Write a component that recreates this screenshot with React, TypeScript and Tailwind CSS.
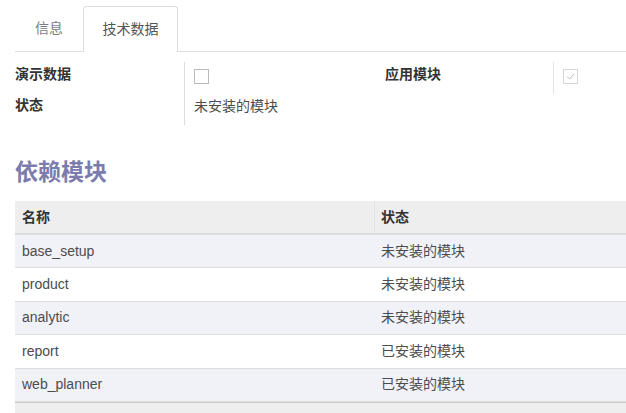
import React from 'react';

const rows = [
  { name: 'base_setup', state: '未安装的模块' },
  { name: 'product', state: '未安装的模块' },
  { name: 'analytic', state: '未安装的模块' },
  { name: 'report', state: '已安装的模块' },
  { name: 'web_planner', state: '已安装的模块' },
];

const font = { fontFamily: '"Liberation Sans", "Noto Sans CJK SC", sans-serif' };

export default function App() {
  return (
    <div className="w-[626px] h-[413px] overflow-hidden bg-white text-[14px] text-[#4c4c4c]" style={font}>
      {/* Tabs */}
      <div className="ml-[15px] mt-[6px] flex h-[46px] border-b border-[#dddddd]">
        <div className="flex w-[68px] items-center justify-center text-[#7a7a8a]">信息</div>
        <div className="-mb-px flex w-[95px] items-center justify-center rounded-t-[4px] border border-b-0 border-[#dddddd] bg-white text-[#555555]">
          技术数据
        </div>
      </div>

      {/* Form */}
      <div className="ml-[15px] mt-[10px] flex">
        <div className="w-[169px] pt-[2px] font-bold text-[#333333]">
          <div className="h-[31px]">演示数据</div>
          <div>状态</div>
        </div>
        <div className="h-[63px] w-[201px] border-l border-[#dddddd] pl-[9px]">
          <div className="mt-[7px] h-[15px] w-[15px] border border-[#bbbbbb]" />
          <div className="mt-[12px]">未安装的模块</div>
        </div>
        <div className="w-[168px] pt-[2px] font-bold text-[#333333]">应用模块</div>
        <div className="h-[32px] border-l border-[#e3e3e3] pl-[9px]">
          <div className="mt-[7px] flex h-[15px] w-[15px] items-center justify-center border border-[#d6d6d6]">
            <svg width="11" height="11" viewBox="0 0 11 11">
              <path d="M2 5.5 L4.5 8 L9 3" fill="none" stroke="#bbbbbb" strokeWidth="1" />
            </svg>
          </div>
        </div>
      </div>

      {/* Heading */}
      <div className="ml-[15px] mt-[31px] text-[23px] font-bold leading-[32px] text-[#7c7bad]">依赖模块</div>

      {/* Table */}
      <div className="ml-[15px] mt-[13px]">
        <div className="flex h-[34px] border-b-2 border-[#dddddd] bg-[#eeeeee] font-bold text-[#333333]">
          <div className="flex w-[360px] items-center border-r border-[#e2e2e2] pl-[7px]">名称</div>
          <div className="flex items-center pl-[6px]">状态</div>
        </div>
        {rows.map((r, i) => (
          <div
            key={r.name}
            className={`flex h-[33.4px] border-b border-[#dddddd] ${i % 2 === 0 ? 'bg-[#f1f1f8]' : 'bg-white'}`}
          >
            <div className="flex w-[360px] items-center pl-[7px]">{r.name}</div>
            <div className="flex items-center pl-[6px]">{r.state}</div>
          </div>
        ))}
        <div className="h-[12px] border-t border-[#cccccc] bg-[#eeeeee]" />
      </div>
    </div>
  );
}
